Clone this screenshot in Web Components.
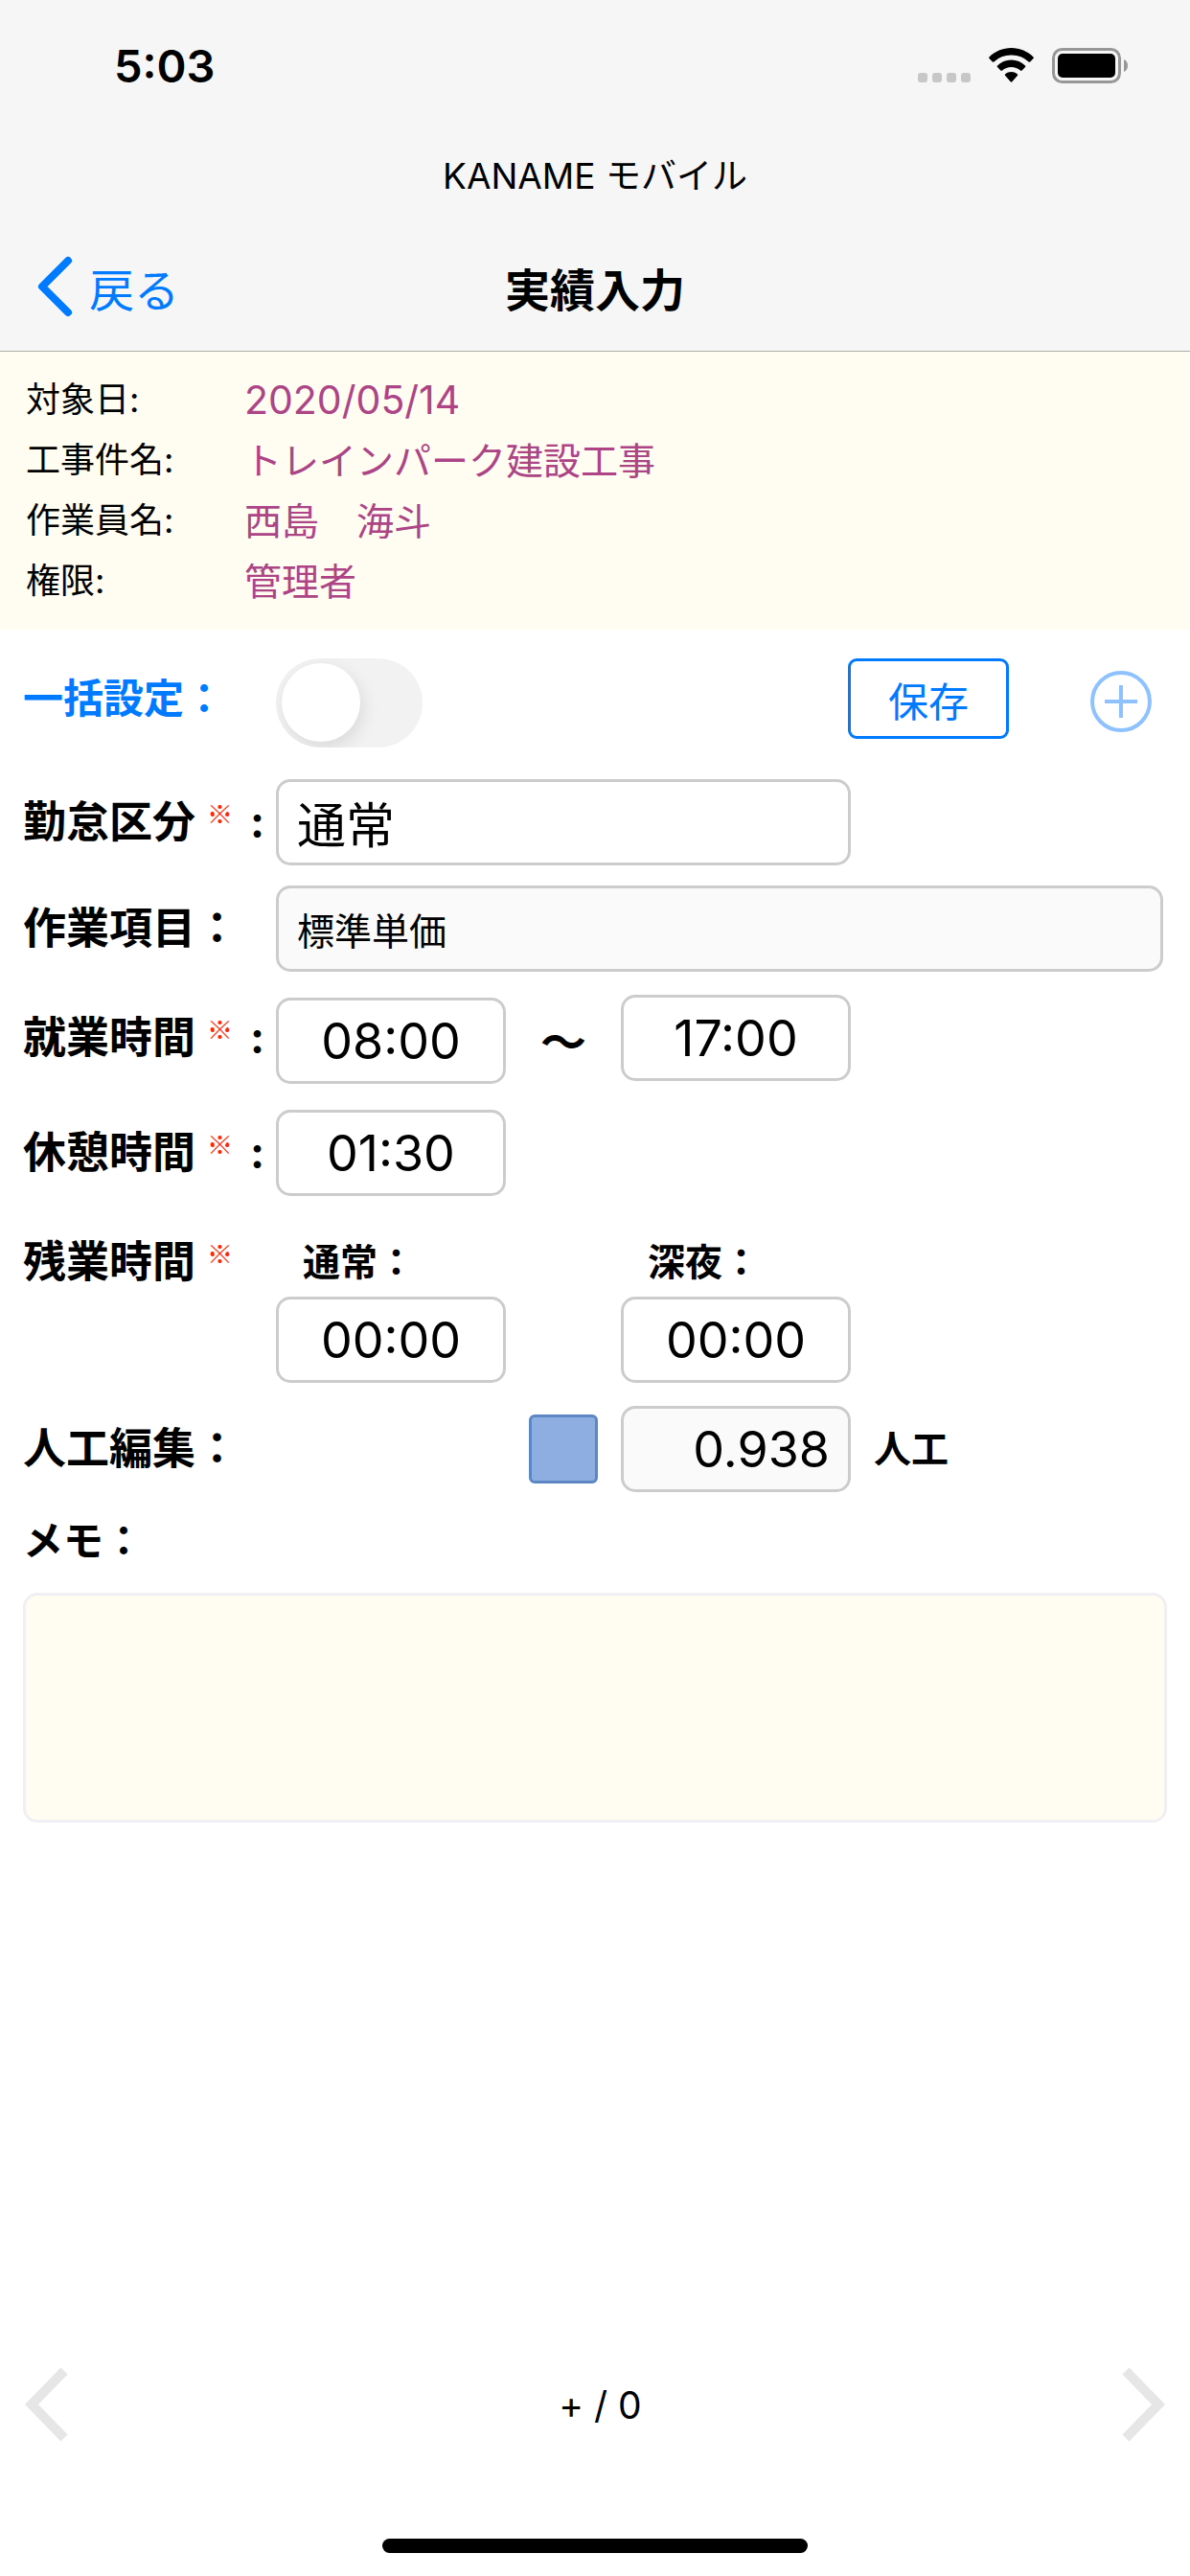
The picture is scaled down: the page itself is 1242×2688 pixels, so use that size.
<!DOCTYPE html>
<html lang="ja">
<head>
<meta charset="utf-8">
<meta name="viewport" content="width=device-width">
<title>実績入力</title>
<style>
    body {
        margin: 0;
        background: #fff;
        color: #000;
        font-family: Inter, "Noto Sans CJK JP", sans-serif;
    }
</style>
</head>
<body>
<app-screen></app-screen>

<script>
// 共通の土台: 各クラスの tpl を shadow root に流し込む
class BaseElement extends HTMLElement {
    constructor() {
        super()
        const shadow = this.attachShadow({ mode: 'open' })
        shadow.innerHTML = this.constructor.tpl
    }
}

class StatusBar extends BaseElement {
    static tpl = `
<style>
    :host {
        display: flex;
        justify-content: space-between;
        align-items: center;
        height: 136px;
        padding: 0 64px 0 119px;
        font-size: 47px;
        font-weight: 600;
    }
    .icons {
        display: flex;
        align-items: flex-end;
        gap: 19px;
    }
    svg {
        display: block;
    }
</style>
<time>5:03</time>
<div class="icons">
    <svg width="55" height="37" viewBox="0 0 55 37" fill="#c7c7c7">
        <rect x="0" y="26" width="10" height="10" rx="3"/>
        <rect x="15" y="26" width="10" height="10" rx="3"/>
        <rect x="30" y="26" width="10" height="10" rx="3"/>
        <rect x="45" y="26" width="10" height="10" rx="3"/>
    </svg>
    <svg width="47" height="37" viewBox="0 0 47 37">
        <path d="M23.5 0C14.5 0 6.400 3.600 0.500 9.400a1.200 1.200 0 0 0 0 1.700l3.300 3.400a1.200 1.200 0 0 0 1.600 0A26 26 0 0 1 23.500 7.600a26 26 0 0 1 18.100 6.900a1.200 1.200 0 0 0 1.600 0l3.300-3.400a1.200 1.200 0 0 0 0-1.700C40.600 3.600 32.500 0 23.500 0z"/>
        <path d="M23.500 12.600c-5.600 0-10.700 2.200-14.500 5.800a1.200 1.200 0 0 0 0 1.700l3.400 3.500a1.200 1.200 0 0 0 1.600 0a14 14 0 0 1 19 0a1.200 1.200 0 0 0 1.600 0l3.400-3.500a1.200 1.200 0 0 0 0-1.700C34.200 14.800 29.100 12.600 23.500 12.600z"/>
        <path d="M23.500 25c-2.400 0-4.600.8-6.300 2.200a1.200 1.200 0 0 0 0 1.800l5.500 6.300a1.100 1.100 0 0 0 1.600 0l5.500-6.300a1.200 1.200 0 0 0 0-1.800A10 10 0 0 0 23.500 25z"/>
    </svg>
    <svg width="80" height="37" viewBox="0 0 80 37">
        <rect x="1.500" y="1.500" width="69" height="34" rx="9" fill="none" stroke="#979797" stroke-width="3"/>
        <rect x="6" y="6" width="60" height="25" rx="5"/>
        <path d="M75 12c2.500 1 4 3.500 4 6.500s-1.500 5.500-4 6.500z" fill="#979797"/>
    </svg>
</div>
`
}
customElements.define('status-bar', StatusBar)

class NavBar extends BaseElement {
    static tpl = `
<style>
    :host {
        display: block;
    }
    .app-name {
        font-size: 37px;
        line-height: 96px;
        text-align: center;
    }
    nav {
        display: grid;
        grid-template-columns: 1fr auto 1fr;
        align-items: center;
        height: 134px;
        padding: 0 38px;
    }
    a {
        display: flex;
        align-items: center;
        gap: 17px;
        color: #007aff;
        font-size: 47px;
        text-decoration: none;
    }
    h1 {
        margin: 0;
        font-size: 47px;
        font-weight: 700;
    }
</style>
<div class="app-name"><slot name="app"></slot></div>
<nav>
    <a href="#back">
        <svg width="38" height="64" viewBox="0 0 38 64" fill="none" stroke="#007aff" stroke-width="8" stroke-linecap="round" stroke-linejoin="round">
            <path d="M33 5L6 32l27 27"/>
        </svg>
        <span>戻る</span>
    </a>
    <h1><slot></slot></h1>
</nav>
`
}
customElements.define('nav-bar', NavBar)

class InfoPanel extends BaseElement {
    static tpl = `
<style>
    :host {
        display: block;
        padding: 19px 27px;
        background: #fffdf1;
    }
    dl {
        display: grid;
        grid-template-columns: 228px 1fr;
        margin: 0;
        line-height: 63px;
    }
    dt {
        font-size: 36px;
    }
    dd {
        margin: 0;
        color: #ad4486;
        font-size: 39px;
    }
    .date {
        font-size: 41px;
    }
</style>
<dl>
    <dt>対象日:</dt><dd class="date">2020/05/14</dd>
    <dt>工事件名:</dt><dd>トレインパーク建設工事</dd>
    <dt>作業員名:</dt><dd>西島　海斗</dd>
    <dt>権限:</dt><dd>管理者</dd>
</dl>
`
}
customElements.define('info-panel', InfoPanel)

// 必須マーク (コロンは slot で渡す)
class RequiredMark extends BaseElement {
    static tpl = `
<style>
    :host {
        display: flex;
        align-items: center;
        gap: 18px;
        padding-left: 12px;
    }
    .mark {
        margin-bottom: 18px;
        color: #ff2600;
        font-family: "Noto Sans CJK JP", sans-serif;
        font-size: 27px;
        font-weight: 500;
        line-height: 30px;
    }
</style>
<span class="mark">※</span><slot></slot>
`
}
customElements.define('required-mark', RequiredMark)

class FormRow extends BaseElement {
    static tpl = `
<style>
    :host {
        display: flex;
        align-items: flex-start;
    }
    .label {
        flex: none;
        width: 264px;
    }
    .fields {
        flex: 1;
        display: flex;
        align-items: flex-start;
    }
</style>
<div class="label"><slot name="label"></slot></div>
<div class="fields"><slot></slot></div>
`
}
customElements.define('form-row', FormRow)

class EntryForm extends BaseElement {
    static tpl = `
<style>
    :host {
        display: block;
        padding: 30px 24px 0;
    }
    form {
        display: flex;
        flex-direction: column;
    }
    label {
        font-size: 39px;
        font-weight: 700;
        line-height: 48px;
    }
    label[slot], .row-label {
        display: flex;
        align-items: center;
        height: 90px;
        font-size: 45px;
        font-weight: 700;
        line-height: 48px;
    }
    input, textarea, button {
        box-sizing: border-box;
        margin: 0;
        font-family: inherit;
        color: #000;
    }
    input[type=text] {
        width: 240px;
        height: 90px;
        padding: 0 19px;
        border: 3px solid #ccc;
        border-radius: 15px;
        background: #fff;
        font-size: 52px;
        outline: 0;
    }
    input[readonly] {
        background: #fafafa;
    }
    input.time {
        text-align: center;
    }
    .gap-s { margin-top: 21px; }
    .gap-m { margin-top: 24px; }
    .gap-l { margin-top: 27px; }
    .gap-xl { margin-top: 33px; }
    .gap-xxl { margin-top: 45px; }

    /* 一括設定 */
    label.bulk {
        height: 84px;
        color: #007aff;
        font-size: 42px;
    }
    .switch {
        appearance: none;
        width: 153px;
        height: 93px;
        padding: 5px 6px;
        border-radius: 47px;
        background: #f2f2f2;
        overflow: hidden;
    }
    .switch::before {
        content: "";
        display: block;
        width: 82px;
        height: 82px;
        border-radius: 50%;
        background: #fff;
        box-shadow: 3px 6px 18px rgba(0, 0, 0, .1);
    }
    .switch:checked::before {
        margin-left: auto;
    }
    .actions {
        display: flex;
        align-items: flex-start;
        gap: 85px;
        margin-left: auto;
        padding-right: 16px;
    }
    .save {
        width: 168px;
        height: 84px;
        padding: 0;
        border: 3px solid #007aff;
        border-radius: 9px;
        background: #fff;
        color: #007aff;
        font-size: 42px;
    }
    .add {
        padding: 13px 0 0;
        border: 0;
        background: none;
    }
    .add svg {
        display: block;
    }

    input#kind {
        width: 600px;
        font-size: 51px;
    }
    input#item {
        flex: 1;
        margin-right: 4px;
        font-size: 39px;
    }
    .range {
        display: flex;
        height: 93px;
    }
    #start {
        align-self: flex-end;
    }
    .tilde {
        width: 120px;
        font-size: 48px;
        font-weight: 700;
        line-height: 100px;
        text-align: center;
    }
    .over {
        display: grid;
        grid-template-columns: 240px 240px;
        gap: 12px 120px;
    }
    .over label {
        padding-left: 28px;
    }
    .over-label {
        height: 48px;
    }
    .man {
        display: flex;
        align-items: center;
        gap: 24px;
        padding-left: 264px;
    }
    .edit {
        appearance: none;
        width: 72px;
        height: 72px;
        border: 3px solid #5c86c4;
        border-radius: 6px;
        background: #8eaee2;
    }
    #man {
        text-align: right;
    }
    .memo {
        display: flex;
        flex-direction: column;
        gap: 30px;
    }
    .memo label {
        font-size: 42px;
    }
    textarea {
        width: 100%;
        height: 240px;
        border: 3px solid #efeff4;
        border-radius: 15px;
        background: #fffdf1;
        font-size: 39px;
        resize: none;
        outline: 0;
    }
</style>
<form>
    <form-row>
        <label slot="label" for="bulk" class="bulk">一括設定：</label>
        <input type="checkbox" role="switch" id="bulk" class="switch">
        <div class="actions">
            <button type="button" class="save">保存</button>
            <button type="button" class="add" aria-label="追加">
                <svg width="64" height="64" viewBox="0 0 64 64" fill="none" stroke="#8ec2ff" stroke-width="4">
                    <circle cx="32" cy="32" r="30"/>
                    <path d="M15 32h34M32 15v34"/>
                </svg>
            </button>
        </div>
    </form-row>

    <form-row class="gap-xl">
        <label slot="label" for="kind">勤怠区分<required-mark>:</required-mark></label>
        <input type="text" id="kind" value="通常">
    </form-row>

    <form-row class="gap-s">
        <label slot="label" for="item">作業項目：</label>
        <input type="text" id="item" value="標準単価" readonly>
    </form-row>

    <form-row class="gap-m">
        <label slot="label" for="start">就業時間<required-mark>:</required-mark></label>
        <div class="range">
            <input type="text" class="time" id="start" value="08:00">
            <span class="tilde">〜</span>
            <input type="text" class="time" id="end" value="17:00" aria-label="就業時間 終了">
        </div>
    </form-row>

    <form-row class="gap-l">
        <label slot="label" for="rest">休憩時間<required-mark>:</required-mark></label>
        <input type="text" class="time" id="rest" value="01:30">
    </form-row>

    <form-row class="gap-xxl">
        <div slot="label" class="row-label over-label">残業時間<required-mark></required-mark></div>
        <div class="over">
            <label for="over-day">通常：</label>
            <label for="over-night">深夜：</label>
            <input type="text" class="time" id="over-day" value="00:00">
            <input type="text" class="time" id="over-night" value="00:00">
        </div>
    </form-row>

    <form-row class="gap-m">
        <label slot="label" for="edit">人工編集：</label>
        <div class="man">
            <input type="checkbox" id="edit" class="edit">
            <input type="text" id="man" value="0.938" readonly>
            <label for="man">人工</label>
        </div>
    </form-row>

    <div class="memo gap-l">
        <label for="memo">メモ：</label>
        <textarea id="memo"></textarea>
    </div>
</form>
`
}
customElements.define('entry-form', EntryForm)

class PagerBar extends BaseElement {
    static tpl = `
<style>
    :host {
        display: flex;
        justify-content: space-between;
        align-items: center;
        height: 84px;
        padding: 0 26px;
        font-size: 39px;
    }
    button {
        padding: 0;
        border: 0;
        background: none;
    }
    svg {
        display: block;
    }
</style>
<button type="button" aria-label="前へ">
    <svg width="46" height="78" viewBox="0 0 46 78" fill="none" stroke="#e6e6e6" stroke-width="10">
        <path d="M41 4L7 39l34 35"/>
    </svg>
</button>
<slot></slot>
<button type="button" aria-label="次へ">
    <svg width="46" height="78" viewBox="0 0 46 78" fill="none" stroke="#e6e6e6" stroke-width="10">
        <path d="M5 4l34 35L5 74"/>
    </svg>
</button>
`
}
customElements.define('pager-bar', PagerBar)

class AppScreen extends BaseElement {
    static tpl = `
<style>
    :host {
        display: flex;
        flex-direction: column;
        min-height: 100vh;
    }
    header {
        border-bottom: 1px solid #adaea6;
        background: #f6f6f6;
    }
    footer {
        margin-top: auto;
        padding-bottom: 24px;
    }
    .home {
        width: 444px;
        height: 15px;
        margin: 98px auto 0;
        border-radius: 8px;
        background: #000;
    }
</style>
<header>
    <status-bar></status-bar>
    <nav-bar><span slot="app">KANAME モバイル</span>実績入力</nav-bar>
</header>
<info-panel></info-panel>
<entry-form></entry-form>
<footer>
    <pager-bar><span>&nbsp;+ / 0</span></pager-bar>
    <div class="home"></div>
</footer>
`
}
customElements.define('app-screen', AppScreen)
</script>
</body>
</html>
